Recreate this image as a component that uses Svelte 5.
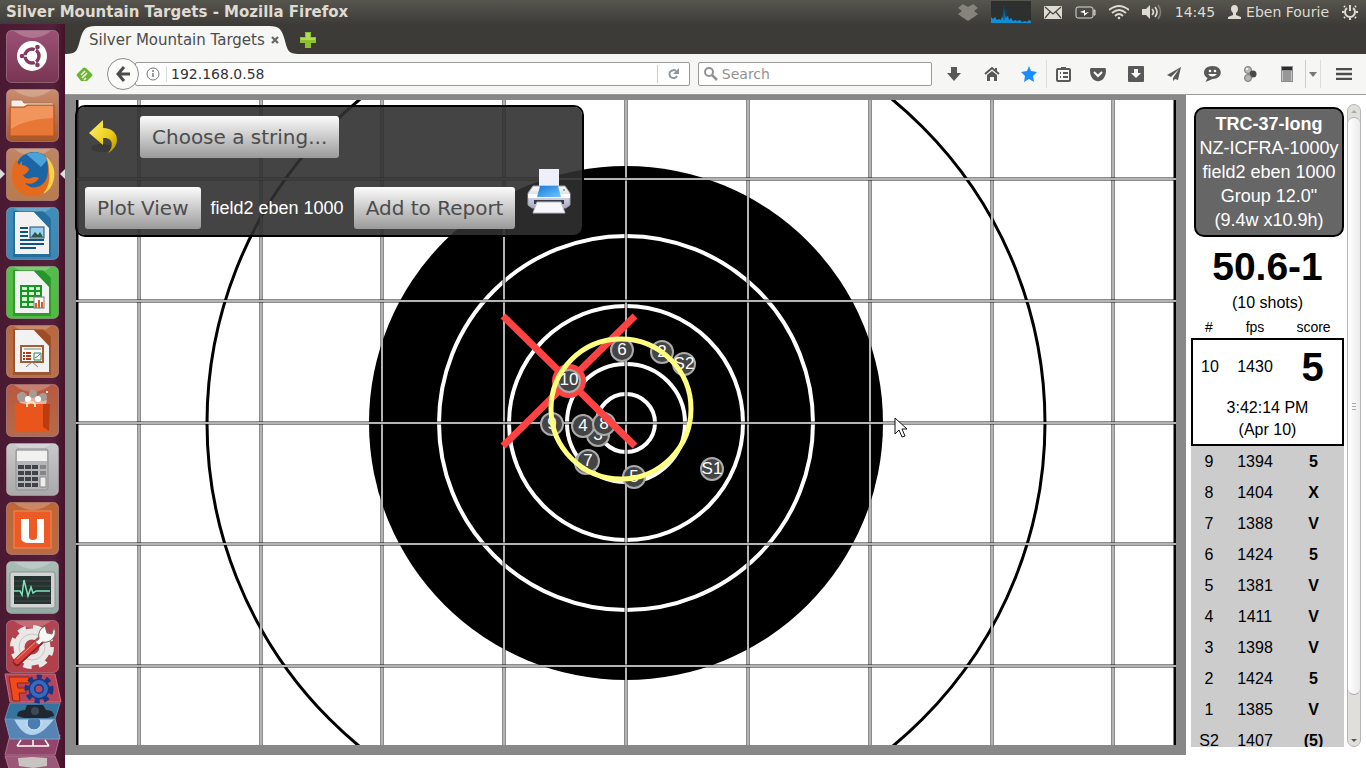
<script lang="ts">
	type Shot = { label: string; fps: number; score: string };
	type Marker = { label: string; x: number; y: number };

	let address = $state('192.168.0.58');
	let query = $state('');

	const shots: Shot[] = [
		{ label: '9', fps: 1394, score: '5' },
		{ label: '8', fps: 1404, score: 'X' },
		{ label: '7', fps: 1388, score: 'V' },
		{ label: '6', fps: 1424, score: '5' },
		{ label: '5', fps: 1381, score: 'V' },
		{ label: '4', fps: 1411, score: 'V' },
		{ label: '3', fps: 1398, score: 'V' },
		{ label: '2', fps: 1424, score: '5' },
		{ label: '1', fps: 1385, score: 'V' },
		{ label: 'S2', fps: 1407, score: '(5)' }
	];

	// later shots lie over earlier ones
	const markers: Marker[] = [
		{ label: 'S1', x: 712, y: 469 },
		{ label: 'S2', x: 684, y: 364 },
		{ label: '1', x: 586, y: 463 },
		{ label: '2', x: 662, y: 352 },
		{ label: '3', x: 598, y: 435 },
		{ label: '4', x: 583, y: 426 },
		{ label: '5', x: 634, y: 477 },
		{ label: '6', x: 622, y: 350 },
		{ label: '7', x: 588, y: 461 },
		{ label: '8', x: 604, y: 424 },
		{ label: '9', x: 552, y: 424 }
	];

	const gridX = [139, 261, 382, 504, 626, 748, 870, 992, 1113];
	const gridY = [179, 301, 423, 544, 666];
	const rings = [187, 117, 59, 29];

	const apps = [
		{ name: 'Dash', top: '#9a5274', bottom: '#7a3554' },
		{ name: 'Files', top: '#c98d6e', bottom: '#a8562c' },
		{ name: 'Firefox', top: '#c08564', bottom: '#b77b4c' },
		{ name: 'Writer', top: '#3f8fbb', bottom: '#3d86b4' },
		{ name: 'Calc', top: '#56bd4c', bottom: '#4cbd3e' },
		{ name: 'Impress', top: '#b9683f', bottom: '#b9714a' },
		{ name: 'Software', top: '#b8593f', bottom: '#b56a4c' },
		{ name: 'Calculator', top: '#c9c9cb', bottom: '#a9a9ac' },
		{ name: 'Ubuntu One', top: '#bf6637', bottom: '#bb6b43' },
		{ name: 'Monitor', top: '#a9bdb6', bottom: '#93aaa3' },
		{ name: 'Settings', top: '#b24350', bottom: '#b23f49' }
	];
</script>

<div class="desktop">
	<header class="topbar">
		<span class="window-title">Silver Mountain Targets - Mozilla Firefox</span>
		<div class="indicators">
			<svg width="20" height="18" viewBox="0 0 20 18" fill="#85837c">
				<path d="M5 1l5 3 5-3 5 4-4 3 4 3-4 3-6 4-6-4-4-3 4-3-4-3z" />
			</svg>
			<svg width="40" height="22" viewBox="0 0 40 22">
				<rect width="40" height="22" fill="#2d302f" />
				<path d="M0 22v-6l2 2 2-2 2 3 2-1 2 1 1-4 1 2 1-9 1 6 1 2 2-1 1 4 2-2 2 3 2-1 2 1 3-1 2 2 3-1 2 1 2-2 2 1v3z" fill="#128fd4" />
				<path d="M13 5v14M15 9v8M12 12v5" stroke="#0d4c6c" />
			</svg>
			<svg width="18" height="13" viewBox="0 0 18 13">
				<rect width="18" height="13" rx="1" fill="#dfdbd2" />
				<path d="M1 1l8 7 8-7M1 12l5-6M17 12l-5-6" fill="none" stroke="#45443f" stroke-width="1.2" />
			</svg>
			<svg width="21" height="13" viewBox="0 0 21 13" fill="none" stroke="#dfdbd2">
				<rect x="1" y="1" width="17" height="11" rx="2" />
				<path d="M19 4v5h1V4z" />
				<path d="M5 6l5-2v3l4-1-5 4V7z" fill="#fff" stroke="none" />
			</svg>
			<svg width="20" height="15" viewBox="0 0 20 15" fill="none" stroke="#dfdbd2" stroke-width="1.8">
				<path d="M0 5Q10-3 20 5M3 8q7-6 14 0M6 11q4-4 8 0" />
				<circle cx="10" cy="13" r="1.3" fill="#dfdbd2" stroke="none" />
			</svg>
			<svg width="20" height="16" viewBox="0 0 20 16">
				<path d="M0 5h4l4-4v14l-4-4H0z" fill="#dfdbd2" />
				<path d="M10 5q3 3 0 6M13 3q4 5 0 10" fill="none" stroke="#dfdbd2" stroke-width="1.7" />
				<path d="M16 1q5 7 0 14" fill="none" stroke="#85837c" stroke-width="1.5" />
			</svg>
			<span>14:45</span>
			<span class="user">
				<svg width="13" height="14" viewBox="0 0 13 14" fill="#dfdbd2">
					<path d="M6.500 0C9 0 10 2 10 4S9 7 8 8v2l5 2v2H0v-2l5-2V8C4 7 3 6 3 4s1-4 3.500-4z" />
				</svg>
				Eben Fourie
			</span>
			<svg width="16" height="17" viewBox="-8 -8 16 17" fill="none" stroke="#dfdbd2" stroke-width="2">
				<path d="M-3-4A5 5 0 1 0 3-4M0-7v6" />
				<path d="M-8 0h2M6 0h2M0 6v2M-5 5l-1 1M5 5l1 1M-5-5l-1-1M5-5l1-1" />
			</svg>
		</div>
	</header>

	<div class="workspace">
		<nav class="launcher" aria-label="Launcher">
			{#each apps as app, i}
				<button class="app" aria-label={app.name}>
					<svg viewBox="0 0 53 53">
						<defs>
							<linearGradient id="tile{i}" x2="0" y2="1">
								<stop stop-color={app.top} />
								<stop offset="1" stop-color={app.bottom} />
							</linearGradient>
						</defs>
						<rect x=".5" y=".5" width="52" height="52" rx="5" fill="url(#tile{i})" stroke="#fff" stroke-opacity=".25" />
						<path d="M8 1h37q-18 14-37 0z" fill="#fff" opacity=".22" />
						{#if app.name === 'Dash'}
							<circle cx="26" cy="26" r="15" fill="#fff" />
							<circle cx="26" cy="26" r="7" fill="none" stroke="#843b5e" stroke-width="3.500" />
							<path d="M26 26H14M26 26l6-11M26 26l6 11" stroke="#fff" stroke-width="1.500" />
							<circle cx="26" cy="26" r="5" fill="#fff" />
							<g fill="#843b5e"><circle cx="16" cy="26" r="2.300" /><circle cx="31.500" cy="17" r="2.300" /><circle cx="31.500" cy="35" r="2.300" /></g>
						{:else if app.name === 'Files'}
							<path d="M5 17v-5l1-1h10l2 3h28q2 0 2 2v5H5z" fill="#f6eee8" stroke="#ab7657" />
							<path d="M4 18h14l3-2h27v30q0 1-1 1H5q-1 0-1-1z" fill="#e87736" stroke="#b35320" />
							<path d="M5 19h14l3-2h25v12Q20 30 5 40z" fill="#f6a36d" opacity=".7" />
						{:else if app.name === 'Firefox'}
							<circle cx="28" cy="23" r="19" fill="#1c65a4" />
							<path d="M20 6q14-5 22 5l-7 8q-9-8-15-13z" fill="#4aa3d6" />
							<path d="M40 8q13 13 6 29-8 13-24 11Q5 43 6 24q1-8 4-12l3 5 3-4v4q4 0 7 4-1 4-6 6 3 5 8 3 4-2 8 0-5 8-14 5 6 7 15 3 12-7 6-30z" fill="#e56a1d" />
							<path d="M40 8q13 13 6 29-3 6-9 9 8-10 6-22 0-9-3-16z" fill="#f8d44b" />
						{:else if app.name === 'Writer' || app.name === 'Calc' || app.name === 'Impress'}
							<path d="M7 4h30l8 8v38H7z" opacity=".4" fill={app.name === 'Writer' ? '#064a78' : app.name === 'Calc' ? '#0b6412' : '#702f10'} />
							<path d="M9 5h19l15 16v26H9z" fill="#f2f2f2" />
							<path d="M28 5h9l7 6v10z" fill={app.name === 'Writer' ? '#246f9f' : app.name === 'Calc' ? '#239728' : '#9d4c24'} />
							{#if app.name === 'Writer'}
								<path d="M14 21h8M14 25h8M14 29h8M14 33h24M14 37h24M14 41h16" stroke="#12527e" stroke-width="2" />
								<rect x="24" y="20" width="14" height="11" fill="#9bd0ee" stroke="#1b4f70" />
								<path d="M25 30l4-5 3 3 2-3 3 5z" fill="#285c45" />
							{:else if app.name === 'Calc'}
								<path d="M15 20h20v21H15zM15 25h20M15 30h20M15 36h20M22 20v21M29 20v21" fill="#d8f8cf" stroke="#159823" stroke-width="2" />
								<rect x="28" y="31" width="10" height="11" fill="#fff" stroke="#777" />
								<path d="M30 42v-5M33 42v-8M36 42v-6" stroke="#d45e24" stroke-width="2" />
							{:else}
								<rect x="15" y="21" width="22" height="16" fill="#fff" stroke="#a85c34" stroke-width="2" />
								<path d="M20 42l6-5 6 5M18 24h17" fill="none" stroke="#83766c" />
								<path d="M17 28h8M17 31h8M17 34h8" stroke="#a73e1c" stroke-width="2" stroke-dasharray="2 1 6" />
								<path d="M28 28h7v7h-7zM29 33l3-2 2-2" fill="none" stroke="#278058" />
							{/if}
						{:else if app.name === 'Software'}
							<path d="M14 19l-3-8 6-3 5 5 4-8 4 8 7-4 4 8-3 7z" fill="#e3b4a3" />
							<g fill="#a79b95"><circle cx="16" cy="13" r="5" /><circle cx="27" cy="10" r="4" /><circle cx="37" cy="13" r="4" /></g>
							<g fill="#fff"><circle cx="22" cy="15" r="3" /><circle cx="32" cy="15" r="3" /><circle cx="41" cy="8" r="1" /></g>
							<path d="M9 20h35l-1 27-34 1z" fill="#e9551b" />
							<path d="M37 20h7l-1 27-6-4z" fill="#bb3c11" />
							<path d="M21 23v-3q4-4 8 0v3" fill="none" stroke="#ffe0be" stroke-width="2" />
						{:else if app.name === 'Calculator'}
							<rect x="10" y="6" width="32" height="41" rx="2" fill="#b6b6b8" stroke="#8f8f92" />
							<path d="M11 8h30v10H11z" fill="#f1f1ef" />
							<path d="M12 24h21M12 30h21M12 36h21M12 42h21" stroke="#404348" stroke-width="4" stroke-dasharray="6 1" />
							<path d="M34 24h6M34 30h6" stroke="#838588" stroke-width="4" />
							<path d="M34 34h6v10h-6z" fill="#eee" stroke="#888" />
						{:else if app.name === 'Ubuntu One'}
							<rect x="8" y="9" width="37" height="37" fill="#ec5b25" stroke="#f28c5c" />
							<path d="M15 17h8v18q0 3 4 3t4-3V17h7v24H23q-8 0-8-6z" fill="#fff" />
						{:else if app.name === 'Monitor'}
							<rect x="4" y="11" width="45" height="36" rx="2" fill="#d1d4d2" stroke="#88918f" />
							<rect x="8" y="15" width="37" height="28" fill="#263230" />
							<path d="M8 20h37M8 25h37M8 35h37M8 40h37" stroke="#3b4c48" />
							<path d="M8 30h6l2 4 2-15 4 16 3-9 2 6 3-2h14" fill="none" stroke="#7ee4ba" stroke-width="1.500" />
						{:else}
							<circle cx="26" cy="27" r="13" fill="none" stroke="#e8e8e6" stroke-width="11" />
							<circle cx="26" cy="27" r="19" fill="none" stroke="#e8e8e6" stroke-width="6" stroke-dasharray="8 7" />
							<circle cx="26" cy="27" r="13" fill="none" stroke="#c9c7c5" stroke-width="1" />
							<path d="M11 42l25-23" stroke="#8e1f22" stroke-width="8" stroke-linecap="round" />
							<path d="M11 41l24-22" stroke="#d8403c" stroke-width="6" stroke-linecap="round" />
							<path d="M11 39l22-20" stroke="#ee8a80" stroke-width="1" />
							<path d="M33 19q-2-9 6-13l2 7 5 1 2-7q4 9-4 14-4 2-8 1l-3 3-4-3z" fill="#f6f6f4" stroke="#7d6466" />
						{/if}
					</svg>
				</button>
			{/each}
			<!-- folded part of the launcher -->
			<svg class="folded" width="60" height="96" viewBox="0 0 60 96">
				<path d="M2 83h50l6 16H7z" fill="#9c5877" stroke="#ad7190" />
				<path d="M15 85l14-1 15 1v8l-14 2-14-2z" fill="#c9c4c2" />
				<path d="M7 62h50l-5 20H2z" fill="#92466b" stroke="#ad7190" />
				<path d="M2 46h50l5 20H7z" fill="#5685b5" stroke="#8098bd" />
				<path d="M11 46q16 32 40 0z" fill="#b3d3ed" />
				<circle cx="31" cy="50" r="7" fill="#497cb1" stroke="#dcebf6" />
				<path d="M14 73h32M18 67l-4 6M30 67v6M42 67l4 6" fill="none" stroke="#fff" stroke-width="1.500" />
				<path d="M7 30h50l-5 16H2z" fill="#36739e" stroke="#628eb1" />
				<path d="M14 43q0-6 8-6l2-5h16l3 5q8 0 8 6l-7 2H21z" fill="#20272e" />
				<circle cx="32" cy="38" r="4" fill="#3d4a55" />
				<path d="M2 1h50l6 28H7z" fill="#b7445a" stroke="#d66a78" />
				<path d="M6 4h20v6H14l1 5h8v5h-7l1 8h-7z" fill="#f24b19" stroke="#8e2514" />
				<circle cx="36" cy="16" r="7" fill="none" stroke="#173884" stroke-width="7" />
				<circle cx="36" cy="16" r="12" fill="none" stroke="#173884" stroke-width="5" stroke-dasharray="5 4" />
				<circle cx="36" cy="16" r="7" fill="none" stroke="#3969bd" stroke-width="4" />
			</svg>
			<span class="pip left"></span>
			<span class="pip right"></span>
		</nav>

		<div class="browser">
			<div class="tabs">
				<div class="tab">
					<svg class="tab-shape" viewBox="0 0 230 28" preserveAspectRatio="none">
						<path d="M0 28C12 28 12 24 15 13 18 3 20 0 30 0H200C210 0 212 3 215 13 218 24 218 28 230 28z" fill="#f6f6f4" />
					</svg>
					<span>Silver Mountain Targets</span>
					<button class="icon-btn" aria-label="Close tab">
						<svg width="8" height="8" viewBox="0 0 8 8"><path d="M1 1l6 6M7 1L1 7" stroke="#666" stroke-width="2.200" /></svg>
					</button>
				</div>
				<button class="icon-btn" aria-label="New tab">
					<svg width="16" height="16" viewBox="0 0 16 16"><path d="M5 0h6v5h5v6h-5v5H5v-5H0V5h5z" fill="#8fc12c" /><path d="M6 1h4v5h5v2H1V6h5z" fill="#b1dc59" /></svg>
				</button>
			</div>

			<div class="toolbar">
				<button class="icon-btn feed" aria-label="Feedly">
					<svg width="17" height="15" viewBox="0 0 17 15"><path d="M7 1q1-1 3 0l6 6q1 1 0 2l-5 5H5L1 9q-1-1 0-2z" fill="#69b72b" /><path d="M5 8l4-4M6 11l5-5M8 13l2-2" stroke="#fff" stroke-width="1.500" /></svg>
				</button>
				<button class="back" aria-label="Back">
					<svg width="16" height="16" viewBox="0 0 16 16" fill="none" stroke="#4c4c4c" stroke-width="3"><path d="M9 1L3 8l6 7M3 8h12" /></svg>
				</button>
				<div class="field url">
					<svg width="14" height="14" viewBox="0 0 14 14" fill="none" stroke="#777"><circle cx="7" cy="7" r="6" /><path d="M7 6v4M7 3v2" stroke-width="1.500" /></svg>
					<input aria-label="Address" bind:value={address} />
					<button class="icon-btn reload" aria-label="Reload">
						<svg width="12" height="12" viewBox="0 0 12 12"><path d="M10 8A4 4 0 1 1 9 3" fill="none" stroke="#8b969e" stroke-width="2" /><path d="M12 0v6H6z" fill="#8b969e" /></svg>
					</button>
				</div>
				<div class="field search">
					<svg width="14" height="14" viewBox="0 0 14 14" fill="none" stroke="#929292"><circle cx="5" cy="5" r="4" stroke-width="2" /><path d="M8 8l5 5" stroke-width="2.500" /></svg>
					<input aria-label="Search" placeholder="Search" bind:value={query} />
				</div>
				<div class="tools">
					<button class="icon-btn" aria-label="Downloads"><svg width="16" height="16" viewBox="0 0 16 16"><path d="M5 1h6v6h4l-7 8-7-8h4z" fill="#595959" /></svg></button>
					<button class="icon-btn" aria-label="Home"><svg width="16" height="16" viewBox="0 0 16 16"><path d="M1 8l7-6 7 6" fill="none" stroke="#595959" stroke-width="2" /><path d="M3 9l5-4 5 4v6h-3v-4H6v4H3zM11 2h2v4l-2-2z" fill="#595959" /></svg></button>
					<button class="icon-btn ruled" aria-label="Bookmark this page"><svg width="18" height="18" viewBox="0 0 18 18"><path d="M9 1l2 5 6 1-4 4 1 6-5-3-5 3 1-6-4-4 6-1z" fill="#198cff" /></svg></button>
					<button class="icon-btn" aria-label="Bookmarks"><svg width="16" height="16" viewBox="0 0 16 16" fill="none" stroke="#595959" stroke-width="2"><rect x="2" y="3" width="13" height="12" rx="1" /><path d="M6 2h5M5 7h1M8 7h5M5 11h1M8 11h5" /></svg></button>
					<button class="icon-btn" aria-label="Pocket"><svg width="16" height="16" viewBox="0 0 16 16"><path d="M1 2h14q1 0 1 2c0 15-16 15-16 0q0-2 1-2z" fill="#595959" /><path d="M4 6l4 4 4-4" fill="none" stroke="#fff" stroke-width="2" /></svg></button>
					<button class="icon-btn" aria-label="Save"><svg width="16" height="16" viewBox="0 0 16 16"><rect width="16" height="16" rx="1" fill="#595959" /><path d="M6 3h4v4h3l-5 5-5-5h3z" fill="#fff" /></svg></button>
					<button class="icon-btn" aria-label="Share"><svg width="16" height="16" viewBox="0 0 16 16"><path d="M15 1L1 9l4 2 8-8-6 9v3l2-2 3 1z" fill="#595959" /></svg></button>
					<button class="icon-btn" aria-label="Hello"><svg width="17" height="16" viewBox="0 0 17 16"><path d="M8.500 0c11 0 11 13 0 13l-7 3 2-4C-3 8 0 0 8.500 0z" fill="#595959" /><path d="M4 8q4 5 9 0z" fill="#fff" /><circle cx="6" cy="5" r="1.300" fill="#fff" /><circle cx="11" cy="5" r="1.300" fill="#fff" /></svg></button>
					<button class="icon-btn" aria-label="Extensions"><svg width="14" height="16" viewBox="0 0 14 16"><circle cx="5" cy="4" r="3.500" fill="#bbb" stroke="#777" /><circle cx="10" cy="8" r="3.500" fill="#494949" /><circle cx="5" cy="12" r="3.500" fill="#b3b3b3" stroke="#777" /><circle cx="4" cy="3" r="1" fill="#fff" /></svg></button>
					<button class="icon-btn" aria-label="Shredder"><svg width="12" height="16" viewBox="0 0 12 16"><path d="M0 0h12v16H0z" fill="#8e8e8e" /><path d="M1 1h10v3H1z" fill="#2c2c2c" /><path d="M1 5h10v10H1z" fill="#c6c6c6" /><path d="M3 5v10M5 5v10M7 5v10M9 5v10" stroke="#6b6b6b" /></svg></button>
					<button class="icon-btn caret" aria-label="More"><svg width="8" height="5" viewBox="0 0 8 5"><path d="M0 0h8L4 5z" fill="#777" /></svg></button>
					<button class="icon-btn menu" aria-label="Menu"><svg width="16" height="12" viewBox="0 0 16 12"><path d="M0 1h16M0 6h16M0 11h16" stroke="#4c4c4c" stroke-width="2.500" /></svg></button>
				</div>
			</div>

			<main class="page">
				<section class="target">
					<svg class="plot" viewBox="76 100 1100 645" preserveAspectRatio="none">
						<rect x="76" y="100" width="1100" height="645" fill="#fff" />
						<path d="M77 100v645M1175 100v645" stroke="#000" stroke-width="3" />
						<circle cx="626" cy="423" r="419" fill="none" stroke="#000" stroke-width="3" />
						<circle cx="626" cy="423" r="257" />
						{#each rings as r}
							<circle cx="626" cy="423" {r} fill="none" stroke="#fff" stroke-width="4" />
						{/each}
						<g class="grid">
							{#each gridX as x}
								<path class="edge" d="M{x} 100v645" /><path d="M{x} 100v645" />
							{/each}
							{#each gridY as y}
								<path class="edge" d="M76 {y}h1100" /><path d="M76 {y}h1100" />
							{/each}
						</g>
						{#each markers as m}
							<g class="shot">
								<circle cx={m.x} cy={m.y} r="11" />
								<text x={m.x} y={m.y + 5}>{m.label}</text>
							</g>
						{/each}
						<path d="M503 316l132 130M635 316L503 446" stroke="#ff4343" stroke-width="7" />
						<circle cx="569" cy="381" r="17" fill="#ff4343" />
						<g class="shot">
							<circle cx="569" cy="381" r="11" />
							<text x="569" y="385">10</text>
						</g>
						<circle cx="621" cy="409" r="70" fill="none" stroke="#ffff80" stroke-width="5" />
						<path d="M895 418v16l4-4 3 7 3-1-3-7h5z" fill="#fff" stroke="#111" />
					</svg>

					<div class="panel">
						<div class="row">
							<button class="icon-btn undo" aria-label="Back">
								<svg width="32" height="36" viewBox="0 0 32 36">
									<defs>
										<linearGradient id="gold" x2="1" y2="1"><stop stop-color="#fff379" /><stop offset=".6" stop-color="#edcc18" /><stop offset="1" stop-color="#b88b00" /></linearGradient>
									</defs>
									<ellipse cx="14" cy="29" rx="11" ry="4" fill="#222" opacity=".3" />
									<path d="M15 1L1 14l14 12v-7c9-1 12 7 5 15C34 26 31 9 15 9z" fill="url(#gold)" />
								</svg>
							</button>
							<button class="btn">Choose a string...</button>
						</div>
						<div class="row bottom">
							<button class="btn">Plot View</button>
							<span class="string-name">field2 eben 1000</span>
							<button class="btn">Add to Report</button>
							<button class="icon-btn printer" aria-label="Print">
								<svg width="44" height="46" viewBox="0 0 44 46">
									<defs>
										<linearGradient id="body" x2="0" y2="1"><stop stop-color="#fff" /><stop offset="1" stop-color="#a7a8bf" /></linearGradient>
										<linearGradient id="blue" x2="1" y2="1"><stop stop-color="#1b78d8" /><stop offset="1" stop-color="#6fc5ff" /></linearGradient>
									</defs>
									<path d="M12 1h20v20H12z" fill="#edf0f8" />
									<path d="M6 18h32l5 7v12l-4 3H5l-4-3V25z" fill="url(#body)" stroke="#9c9eb6" />
									<path d="M1 26h42v4H1z" fill="#fff" />
									<path d="M13 18h18l3 11H10z" fill="url(#blue)" />
									<path d="M7 32h30v4H7z" fill="#383a4b" />
									<path d="M10 34h24l4 11H6z" fill="#f7f7fc" stroke="#b9bac9" />
									<circle cx="37" cy="22" r="1" fill="#59a53c" />
								</svg>
							</button>
						</div>
					</div>
				</section>

				<aside class="sidebar">
					<div class="results">
						<div class="summary">
							<strong>TRC-37-long</strong>
							<span>NZ-ICFRA-1000y</span>
							<span>field2 eben 1000</span>
							<span>Group 12.0"</span>
							<span>(9.4w x10.9h)</span>
						</div>
						<div class="total">50.6-1</div>
						<div class="count">(10 shots)</div>
						<table>
							<thead>
								<tr><th class="num">#</th><th class="fps">fps</th><th>score</th></tr>
							</thead>
							<tbody class="current">
								<tr><td>10</td><td>1430</td><td class="big">5</td></tr>
								<tr><td class="time" colspan="3">3:42:14 PM<br />(Apr 10)</td></tr>
							</tbody>
							<tbody class="history">
								{#each shots as shot}
									<tr><td>{shot.label}</td><td>{shot.fps}</td><td class="score">{shot.score}</td></tr>
								{/each}
							</tbody>
						</table>
					</div>
					<div class="scrollbar">
						<span class="arrow up"></span>
						<div class="thumb"><i></i><i></i><i></i></div>
						<span class="arrow down"></span>
					</div>
				</aside>
			</main>
		</div>
	</div>
</div>

<style>
	:global(body) {
		margin: 0;
	}

	.desktop {
		display: flex;
		flex-direction: column;
		height: 100vh;
		overflow: hidden;
		font-family: 'DejaVu Sans', sans-serif;
		font-size: 14px;
		color: #4c4c4c;
	}

	button {
		padding: 0;
		border: 0;
		background: none;
		font: inherit;
		color: inherit;
	}

	svg {
		display: block;
		flex: none;
	}

	.icon-btn {
		display: grid;
		place-items: center;
	}

	/* Top bar */
	.topbar {
		flex: 0 0 24px;
		display: flex;
		align-items: center;
		justify-content: space-between;
		padding: 0 8px 0 6px;
		background: linear-gradient(#56554e, #3d3c38);
		color: #dfdbd2;
	}

	.window-title {
		font-weight: 700;
		font-size: 15px;
	}

	.indicators {
		display: flex;
		align-items: center;
		gap: 13px;
	}

	.user {
		display: flex;
		align-items: center;
		gap: 5px;
	}

	.workspace {
		flex: 1;
		min-height: 0;
		display: flex;
	}

	/* Launcher */
	.launcher {
		position: relative;
		flex: 0 0 65px;
		box-sizing: border-box;
		display: flex;
		flex-direction: column;
		gap: 6px;
		padding: 6px 0 0 6px;
		overflow: hidden;
		background: linear-gradient(90deg, #4a1932, #55203b 80%, #431329);
	}

	.app {
		flex: none;
		width: 53px;
		height: 53px;
	}

	.folded {
		margin: -6px 0 0 -3px;
	}

	.pip {
		position: absolute;
		top: 145px;
		border: 5px solid transparent;
	}

	.pip.left {
		left: 0;
		border-left-color: #ddd;
		border-right: 0;
	}

	.pip.right {
		right: 0;
		border-right-color: #ddd;
		border-left: 0;
	}

	/* Browser chrome */
	.browser {
		flex: 1;
		min-width: 0;
		display: flex;
		flex-direction: column;
		background: #fff;
	}

	.tabs {
		flex: 0 0 30px;
		display: flex;
		align-items: flex-end;
		background: #3c3b37;
	}

	.tabs > .icon-btn {
		height: 28px;
	}

	.tab {
		position: relative;
		display: flex;
		align-items: center;
		gap: 6px;
		height: 28px;
		padding: 0 21px 0 24px;
		font-size: 15px;
	}

	.tab span,
	.tab button {
		position: relative;
	}

	.tab-shape {
		position: absolute;
		inset: 0;
		width: 100%;
		height: 100%;
	}

	.toolbar {
		flex: 0 0 40px;
		display: flex;
		align-items: center;
		background: #f6f6f4;
		border-bottom: 1px solid #999;
	}

	.feed {
		width: 42px;
		padding-right: 4px;
	}

	.back {
		position: relative;
		z-index: 1;
		display: grid;
		place-items: center;
		width: 32px;
		height: 32px;
		border: 1px solid #8b8b8b;
		border-radius: 50%;
		background: #fbfbfa;
	}

	.field {
		display: flex;
		align-items: center;
		box-sizing: border-box;
		height: 24px;
		border: 1px solid #999;
		border-radius: 2px;
		background: #fff;
	}

	.field input {
		flex: 1;
		min-width: 0;
		padding: 0 4px;
		border: 0;
		outline: 0;
		background: none;
		font: inherit;
		color: #333;
	}

	.field input::placeholder {
		color: #929292;
		opacity: 1;
	}

	.url {
		flex: 1;
		margin-left: -4px;
		padding-left: 10px;
	}

	.url input {
		margin-left: 6px;
		border-left: 1px solid #ddd;
	}

	.reload {
		width: 32px;
		height: 18px;
		border-left: 1px solid #ccc;
	}

	.search {
		flex: 0 0 18%;
		margin-left: 8px;
		padding-left: 5px;
	}

	.tools {
		display: grid;
		grid-template-columns: 38px 38px 36px 32px repeat(5, 38px) 36px 16px 45px;
		margin-left: 3px;
	}

	.tools .icon-btn {
		height: 28px;
	}

	.ruled,
	.caret {
		border-right: 1px solid #ddd;
	}

	.caret {
		border-left: 1px solid #ccc;
	}

	/* Page */
	.page {
		flex: 1;
		min-height: 0;
		display: flex;
		box-sizing: border-box;
		padding-bottom: 13px;
		font-family: 'Liberation Sans', Arial, sans-serif;
	}

	.target {
		position: relative;
		flex: 1;
		min-width: 0;
		box-sizing: border-box;
		padding: 5px 10px 10px 11px;
		background: #888;
	}

	.plot {
		width: 100%;
		height: 100%;
	}

	.grid path {
		stroke: #b4b4b4;
		stroke-width: 2;
	}

	.grid .edge {
		stroke: rgba(0, 0, 0, 0.45);
		stroke-width: 4;
	}

	.shot circle {
		fill: #444;
		stroke: #aaa;
		stroke-width: 2;
	}

	.shot text {
		fill: #fff;
		font-size: 17px;
		text-anchor: middle;
	}

	/* Controls over the plot */
	.panel {
		position: absolute;
		top: 10px;
		left: 10px;
		display: grid;
		gap: 10px;
		padding: 9px 11px 6px 8px;
		border: 2px solid #000;
		border-radius: 10px;
		background: rgba(48, 48, 48, 0.9);
		background-clip: padding-box;
	}

	.row {
		display: flex;
		align-items: center;
	}

	.row.bottom {
		align-items: flex-end;
		height: 61px;
	}

	.btn {
		height: 42px;
		padding: 0 12px;
		border-radius: 3px;
		background: linear-gradient(#fbfbfb, #9a9a9a);
		font-family: 'DejaVu Sans', sans-serif;
		font-size: 20px;
		white-space: nowrap;
	}

	.undo {
		width: 55px;
		padding-right: 18px;
	}

	.string-name {
		padding: 0 10px;
		color: #fff;
		font-size: 18px;
		line-height: 42px;
		white-space: nowrap;
	}

	.printer {
		align-self: flex-start;
		margin-left: 12px;
	}

	/* Sidebar */
	.sidebar {
		flex: 0 0 180px;
		box-sizing: border-box;
		display: flex;
		gap: 3px;
		padding: 9px 5px 8px;
		color: #000;
	}

	.results {
		flex: 1;
		overflow: hidden;
		text-align: center;
		font-size: 16px;
	}

	.summary {
		display: flex;
		flex-direction: column;
		margin: 3px 0 0 3px;
		padding: 3px 0;
		border: 2px solid #000;
		border-radius: 10px;
		background: #666;
		color: #fff;
		font-size: 18px;
		line-height: 24px;
		white-space: nowrap;
	}

	.total {
		margin-top: 6px;
		font-size: 39px;
		font-weight: 700;
		line-height: 48px;
	}

	.count {
		line-height: 24px;
	}

	table {
		width: 100%;
		border-spacing: 0;
		table-layout: fixed;
	}

	th,
	td {
		padding: 0;
	}

	th {
		height: 23px;
		font-size: 14px;
		font-weight: 400;
	}

	.num {
		width: 36px;
	}

	.fps {
		width: 56px;
	}

	.current td {
		height: 54px;
		border-top: 2px solid #000;
	}

	.current td:first-child {
		border-left: 2px solid #000;
	}

	.current td:last-child {
		border-right: 2px solid #000;
	}

	.current .big {
		font-size: 40px;
		font-weight: 700;
		line-height: 54px;
	}

	.current .time {
		height: 50px;
		border-top: 0;
		border-bottom: 2px solid #000;
		line-height: 22px;
	}

	.history td {
		height: 31px;
		background: #ccc;
	}

	.score {
		font-weight: 700;
	}

	/* Scrollbar */
	.scrollbar {
		flex: 0 0 12px;
		display: flex;
		flex-direction: column;
		border: 1px solid #b5b5b5;
		border-radius: 7px;
		background: #e0dfdc;
	}

	.arrow {
		display: grid;
		place-items: center;
		height: 12px;
	}

	.arrow::after {
		content: '';
		border: 3px solid transparent;
	}

	.up::after {
		border-bottom-color: #aaa;
		border-top: 0;
	}

	.down::after {
		border-top-color: #555;
		border-bottom: 0;
	}

	.thumb {
		flex: 1;
		display: flex;
		flex-direction: column;
		align-items: center;
		justify-content: center;
		gap: 2px;
		margin-bottom: 39px;
		border: 1px solid #aaa;
		border-width: 1px 0;
		border-radius: 7px;
		background: linear-gradient(90deg, #fff, #ececec);
	}

	.thumb i {
		width: 4px;
		height: 1px;
		background: #aaa;
	}
</style>
